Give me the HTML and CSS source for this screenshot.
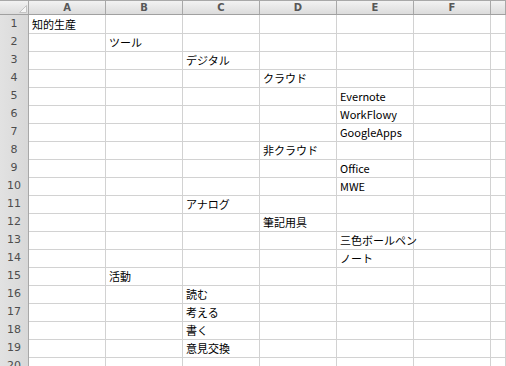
FILE: index.html
```html
<!DOCTYPE html>
<html lang="ja">
<head>
<meta charset="utf-8">
<link rel="stylesheet" href="styles.css">
</head>
<body>
<div class="sheet">
  <div class="hdr">
    <div class="corner"><svg width="8" height="8" viewBox="0 0 8 8"><polygon points="7.5,0.5 7.5,7.5 0.5,7.5" fill="#f6f6f6" stroke="#c4c4c4" stroke-width="1"/></svg></div>
    <div class="ch">A</div><div class="ch">B</div><div class="ch">C</div><div class="ch">D</div><div class="ch">E</div><div class="ch">F</div><div class="ch"></div>
  </div>
  <div class="row"><div class="rn">1</div><div class="c">知的生産</div><div class="c"></div><div class="c"></div><div class="c"></div><div class="c"></div><div class="c"></div><div class="c"></div></div>
  <div class="row"><div class="rn">2</div><div class="c"></div><div class="c">ツール</div><div class="c"></div><div class="c"></div><div class="c"></div><div class="c"></div><div class="c"></div></div>
  <div class="row"><div class="rn">3</div><div class="c"></div><div class="c"></div><div class="c">デジタル</div><div class="c"></div><div class="c"></div><div class="c"></div><div class="c"></div></div>
  <div class="row"><div class="rn">4</div><div class="c"></div><div class="c"></div><div class="c"></div><div class="c">クラウド</div><div class="c"></div><div class="c"></div><div class="c"></div></div>
  <div class="row"><div class="rn">5</div><div class="c"></div><div class="c"></div><div class="c"></div><div class="c"></div><div class="c">Evernote</div><div class="c"></div><div class="c"></div></div>
  <div class="row"><div class="rn">6</div><div class="c"></div><div class="c"></div><div class="c"></div><div class="c"></div><div class="c">WorkFlowy</div><div class="c"></div><div class="c"></div></div>
  <div class="row"><div class="rn">7</div><div class="c"></div><div class="c"></div><div class="c"></div><div class="c"></div><div class="c">GoogleApps</div><div class="c"></div><div class="c"></div></div>
  <div class="row"><div class="rn">8</div><div class="c"></div><div class="c"></div><div class="c"></div><div class="c">非クラウド</div><div class="c"></div><div class="c"></div><div class="c"></div></div>
  <div class="row"><div class="rn">9</div><div class="c"></div><div class="c"></div><div class="c"></div><div class="c"></div><div class="c">Office</div><div class="c"></div><div class="c"></div></div>
  <div class="row"><div class="rn">10</div><div class="c"></div><div class="c"></div><div class="c"></div><div class="c"></div><div class="c">MWE</div><div class="c"></div><div class="c"></div></div>
  <div class="row"><div class="rn">11</div><div class="c"></div><div class="c"></div><div class="c">アナログ</div><div class="c"></div><div class="c"></div><div class="c"></div><div class="c"></div></div>
  <div class="row"><div class="rn">12</div><div class="c"></div><div class="c"></div><div class="c"></div><div class="c">筆記用具</div><div class="c"></div><div class="c"></div><div class="c"></div></div>
  <div class="row"><div class="rn">13</div><div class="c"></div><div class="c"></div><div class="c"></div><div class="c"></div><div class="c">三色ボールペン</div><div class="c"></div><div class="c"></div></div>
  <div class="row"><div class="rn">14</div><div class="c"></div><div class="c"></div><div class="c"></div><div class="c"></div><div class="c">ノート</div><div class="c"></div><div class="c"></div></div>
  <div class="row"><div class="rn">15</div><div class="c"></div><div class="c">活動</div><div class="c"></div><div class="c"></div><div class="c"></div><div class="c"></div><div class="c"></div></div>
  <div class="row"><div class="rn">16</div><div class="c"></div><div class="c"></div><div class="c">読む</div><div class="c"></div><div class="c"></div><div class="c"></div><div class="c"></div></div>
  <div class="row"><div class="rn">17</div><div class="c"></div><div class="c"></div><div class="c">考える</div><div class="c"></div><div class="c"></div><div class="c"></div><div class="c"></div></div>
  <div class="row"><div class="rn">18</div><div class="c"></div><div class="c"></div><div class="c">書く</div><div class="c"></div><div class="c"></div><div class="c"></div><div class="c"></div></div>
  <div class="row"><div class="rn">19</div><div class="c"></div><div class="c"></div><div class="c">意見交換</div><div class="c"></div><div class="c"></div><div class="c"></div><div class="c"></div></div>
  <div class="row"><div class="rn">20</div><div class="c"></div><div class="c"></div><div class="c"></div><div class="c"></div><div class="c"></div><div class="c"></div><div class="c"></div></div>
</div>
</body>
</html>
```
FILE: styles.css
```css
* { box-sizing: border-box; }
html, body { margin: 0; padding: 0; background: #ffffff; overflow: hidden; }
.sheet {
  width: 506px;
  height: 366px;
  overflow: hidden;
  font-family: "Noto Sans CJK JP", "Noto Sans", sans-serif;
  font-size: 11px;
  color: #000;
}
.hdr {
  display: grid;
  grid-template-columns: 29px repeat(6, 77px) 1fr;
  height: 15px;
  border-top: 1px solid #a8a8a8;
  border-bottom: 1px solid #a0a0a0;
  background: linear-gradient(#f2f2f2, #dcdcdc);
}
.corner {
  border-right: 1px solid #a8a8a8;
  display: flex;
  justify-content: flex-end;
  align-items: flex-end;
  padding: 0 1px 1px 0;
}
.corner svg { display: block; }
.ch {
  border-right: 1px solid #a8a8a8;
  text-align: center;
  font-family: "DejaVu Sans", sans-serif;
  font-weight: bold;
  font-size: 10px;
  line-height: 13px;
  color: #575757;
}
.row {
  display: grid;
  grid-template-columns: 29px repeat(6, 77px) 1fr;
  height: 18px;
}
.rn {
  background: linear-gradient(90deg, #e2e2e2, #d8d8d8);
  border-right: 1px solid #a8a8a8;
  border-bottom: 1px solid #bdbdbd;
  text-align: center;
  font-family: "DejaVu Sans", sans-serif;
  font-size: 11px;
  line-height: 18px;
  color: #4d4d4d;
}
.c {
  border-right: 1px solid #d2d2d2;
  border-bottom: 1px solid #d2d2d2;
  padding: 1px 0 0 3px;
  line-height: 17px;
  white-space: nowrap;
}
```
